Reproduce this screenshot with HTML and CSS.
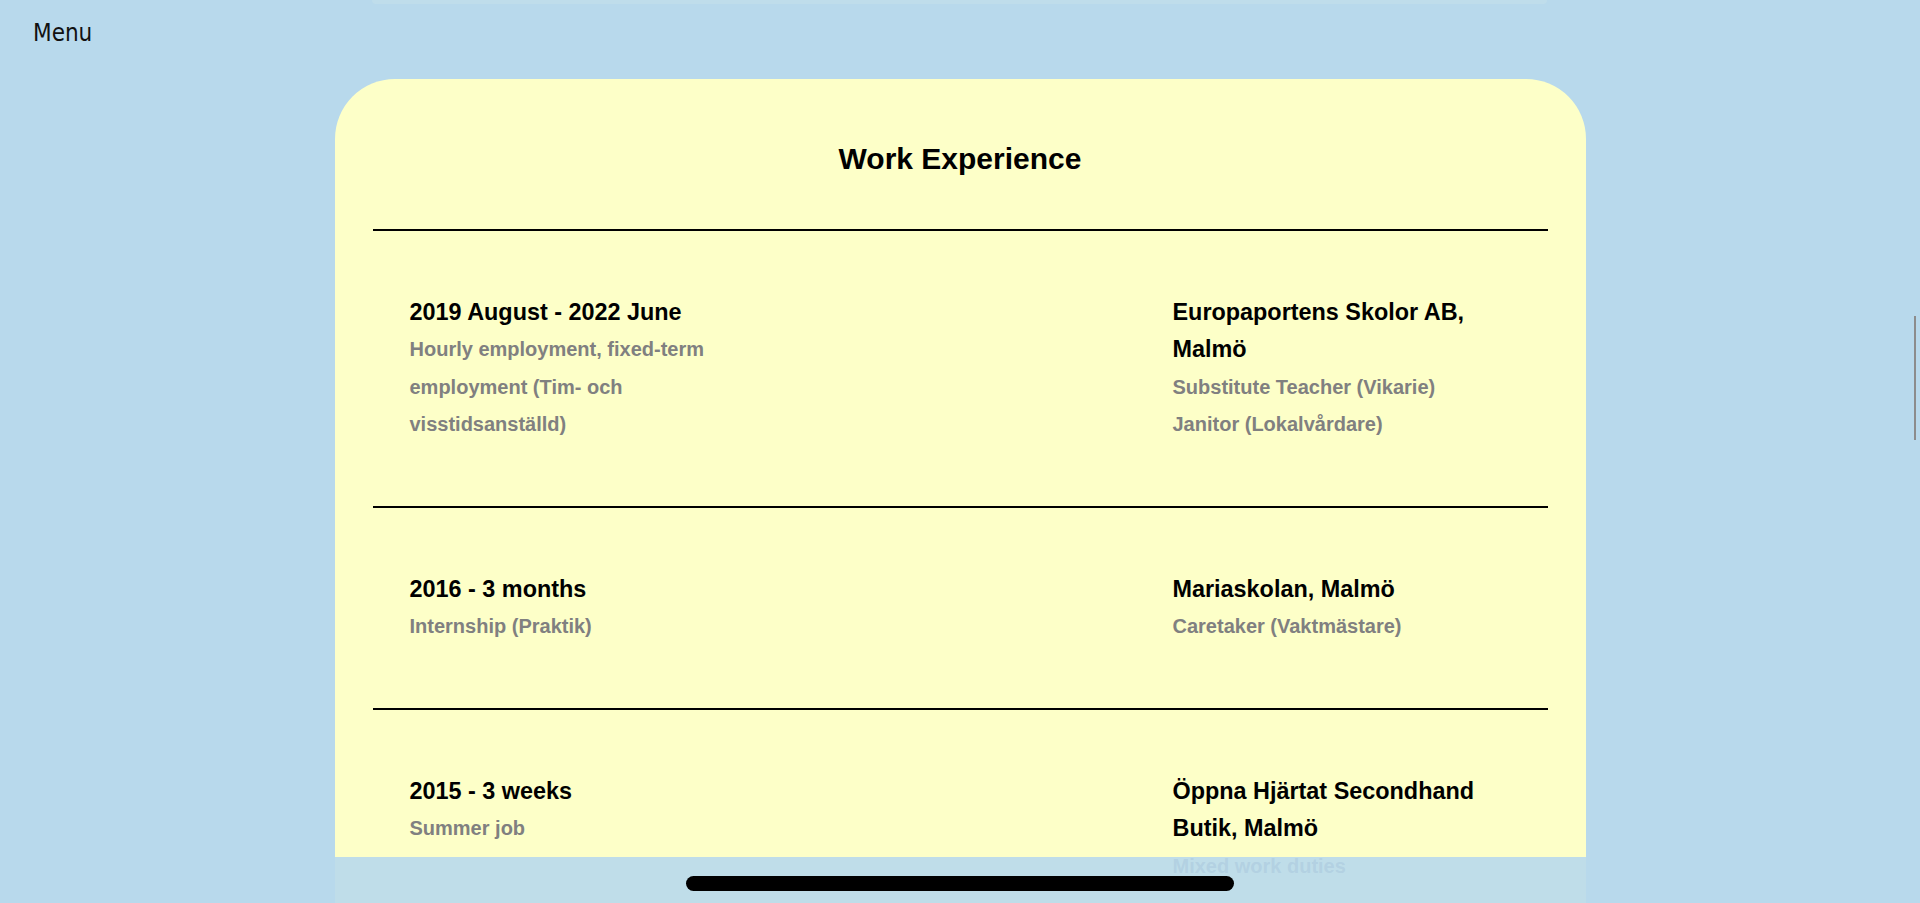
FILE: index.html
```html
<!DOCTYPE html>
<html lang="en">
<head>
<meta charset="utf-8">
<title>Work Experience</title>
<link rel="stylesheet" href="styles.css">
</head>
<body>
<div class="top-edge"></div>
<header class="header">
  <span class="menu">Menu</span>
</header>
<main class="card">
  <h2 class="title">Work Experience</h2>
  <hr class="rule">
  <section class="row">
    <div class="col">
      <h3 class="head">2019 August - 2022 June</h3>
      <p class="sub">Hourly employment, fixed-term employment (Tim- och visstidsanställd)</p>
    </div>
    <div class="col">
      <h3 class="head">Europaportens Skolor AB, Malmö</h3>
      <p class="sub">Substitute Teacher (Vikarie)</p>
      <p class="sub">Janitor (Lokalvårdare)</p>
    </div>
  </section>
  <hr class="rule">
  <section class="row">
    <div class="col">
      <h3 class="head">2016 - 3 months</h3>
      <p class="sub">Internship (Praktik)</p>
    </div>
    <div class="col">
      <h3 class="head">Mariaskolan, Malmö</h3>
      <p class="sub">Caretaker (Vaktmästare)</p>
    </div>
  </section>
  <hr class="rule">
  <section class="row">
    <div class="col">
      <h3 class="head">2015 - 3 weeks</h3>
      <p class="sub">Summer job</p>
    </div>
    <div class="col">
      <h3 class="head">Öppna Hjärtat Secondhand Butik, Malmö</h3>
      <p class="sub">Mixed work duties</p>
    </div>
  </section>
</main>
<div class="bottom-bar"><div class="pill"></div></div>
<div class="scroll-thumb"></div>
</body>
</html>
```
FILE: styles.css
```css
html {
  overflow: hidden;
}
body {
  margin: 0;
  background: #b8d9ec;
  font-family: "Liberation Sans", Arial, sans-serif;
  color: #000;
}
.header {
  height: 79px;
  box-sizing: border-box;
  padding: 21px 0 0 33px;
}
.menu {
  display: block;
  font-family: "DejaVu Sans", sans-serif;
  font-stretch: condensed;
  font-size: 24px;
  line-height: 24px;
  color: #111;
}
.top-edge {
  position: fixed;
  top: 0;
  left: 372px;
  width: 1175px;
  height: 4px;
  border-radius: 0 0 14px 14px;
  background: rgba(200, 226, 234, 0.45);
}
.card {
  width: 1251px;
  margin: 0 auto;
  box-sizing: border-box;
  padding: 0 38px 40px;
  background: #fdffc8;
  border-radius: 60px 60px 0 0;
}
.title {
  margin: 0;
  padding: 62px 0 52px;
  font-size: 30px;
  line-height: 36px;
  font-weight: bold;
  text-align: center;
}
.rule {
  margin: 0;
  border: 0;
  height: 2px;
  background: #000;
}
.row {
  display: flex;
  justify-content: space-between;
  padding: 62.5px 37px;
}
.col {
  width: 338px;
}
.head {
  margin: 0;
  font-size: 23.4px;
  line-height: 37.5px;
  font-weight: bold;
}
.sub {
  margin: 0;
  font-size: 20px;
  line-height: 37.5px;
  font-weight: bold;
  color: #808080;
}
.bottom-bar {
  position: fixed;
  bottom: 0;
  left: 50%;
  width: 1251px;
  height: 46px;
  margin-left: -625.5px;
  background: rgba(184, 217, 236, 0.9);
  display: flex;
  justify-content: center;
  padding-top: 19px;
  box-sizing: border-box;
}
.pill {
  width: 548px;
  height: 15px;
  border-radius: 8px;
  background: #000;
}
.scroll-thumb {
  position: fixed;
  top: 316px;
  left: 1914px;
  width: 2px;
  height: 124px;
  background: #8c8c8c;
}
```
